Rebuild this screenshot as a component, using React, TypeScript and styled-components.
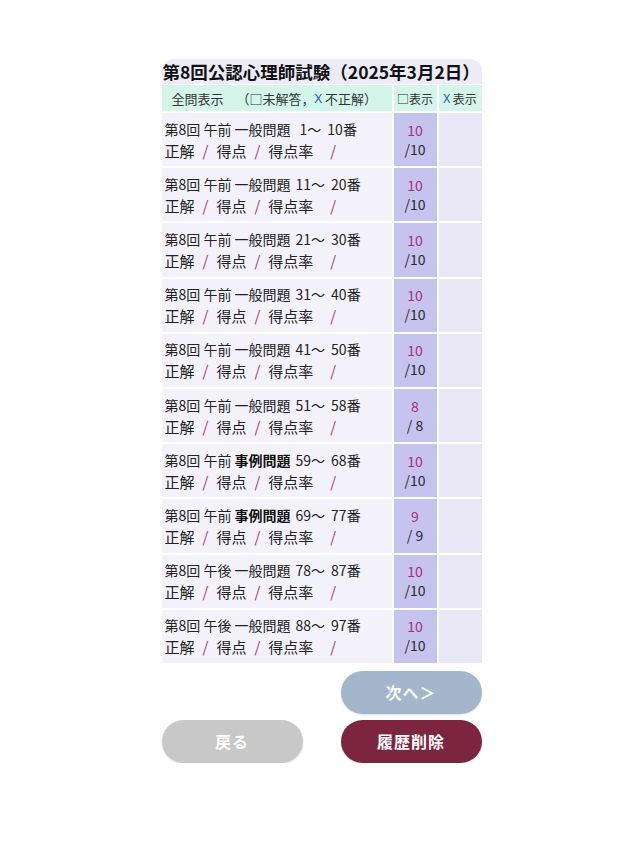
import React from "react";
import styled, { createGlobalStyle } from "styled-components";

const GlobalStyle = createGlobalStyle`
  html, body {
    margin: 0;
    padding: 0;
    background: #ffffff;
  }
  body {
    font-family: "Noto Sans CJK JP", "Noto Sans", sans-serif;
    color: #222222;
    text-spacing-trim: space-all;
  }
`;

const Page = styled.div`
  display: flex;
  justify-content: center;
  padding-top: 59px;
`;

const Column = styled.div`
  width: 320px;
  display: flex;
  flex-direction: column;
`;

const Panel = styled.section`
  background-color: #ecebf8;
  border-radius: 12px 12px 0 0;
  overflow: hidden;
`;

const Title = styled.h1`
  margin: 0;
  padding: 0 0 0 1px;
  height: 25px;
  font-size: 17.5px;
  line-height: 26px;
  font-weight: 700;
  color: #111111;
  white-space: nowrap;
`;

const Grid = styled.div`
  display: grid;
  grid-template-columns: 230px 43px 43px;
  gap: 2px;
  background-color: #ffffff;
  padding-top: 1px;
`;

const HeadCell = styled.div<{ $center?: boolean }>`
  background-color: #d4f5ea;
  height: 26px;
  display: flex;
  align-items: center;
  justify-content: ${(p) => (p.$center ? "center" : "flex-start")};
  padding-left: ${(p) => (p.$center ? "0" : "10px")};
  font-size: ${(p) => (p.$center ? "12px" : "13px")};
  color: #333333;
  white-space: pre;
`;

const Blue = styled.span`
  color: #1d5fa8;
  font-family: "Noto Sans", sans-serif;
`;

const LabelCell = styled.div`
  background-color: #f3f2fa;
  height: 53.2px;
  padding-left: 3px;
  display: flex;
  flex-direction: column;
  justify-content: center;
  color: #222222;
  white-space: nowrap;
`;

const TitleLine = styled.div`
  font-size: 14px;
  line-height: 21px;
`;

const ScoreLine = styled.div`
  font-size: 15px;
  line-height: 21px;
`;

const Strong = styled.b`
  font-weight: 700;
  color: #111111;
`;

const From = styled.span<{ $single?: boolean }>`
  margin-left: ${(p) => (p.$single ? "9px" : "5px")};
`;

const To = styled.span`
  margin-left: 6px;
`;

const Slash = styled.span<{ $wide?: boolean }>`
  color: #b0386a;
  margin: 0 8px 0 ${(p) => (p.$wide ? "17px" : "8px")};
`;

const ScoreCell = styled.div`
  background-color: #c6c4ef;
  display: flex;
  flex-direction: column;
  align-items: center;
  justify-content: center;
  font-size: 14px;
  line-height: 19px;
  color: #2a2a2a;
`;

const Correct = styled.span`
  color: #a3307a;
`;

const EmptyCell = styled.div`
  background-color: #e9e7f6;
`;

const Buttons = styled.div`
  display: grid;
  grid-template-columns: 141px 141px;
  justify-content: space-between;
  row-gap: 6px;
  margin-top: 8px;
`;

const Pill = styled.button<{ $bg: string; $col?: number }>`
  grid-column: ${(p) => p.$col ?? "auto"};
  height: 43px;
  border: none;
  border-radius: 22px;
  background-color: ${(p) => p.$bg};
  color: #ffffff;
  font-family: "Noto Sans CJK JP", sans-serif;
  font-size: 16px;
  font-weight: 700;
  letter-spacing: 1px;
  box-shadow: 0 1px 2px rgba(0, 0, 0, 0.12);
  cursor: pointer;
`;

interface Section {
  part: string;
  kind: string;
  bold?: boolean;
  from: number;
  to: number;
  total: number;
}

const sections: Section[] = [
  { part: "午前", kind: "一般問題", from: 1, to: 10, total: 10 },
  { part: "午前", kind: "一般問題", from: 11, to: 20, total: 10 },
  { part: "午前", kind: "一般問題", from: 21, to: 30, total: 10 },
  { part: "午前", kind: "一般問題", from: 31, to: 40, total: 10 },
  { part: "午前", kind: "一般問題", from: 41, to: 50, total: 10 },
  { part: "午前", kind: "一般問題", from: 51, to: 58, total: 8 },
  { part: "午前", kind: "事例問題", bold: true, from: 59, to: 68, total: 10 },
  { part: "午前", kind: "事例問題", bold: true, from: 69, to: 77, total: 9 },
  { part: "午後", kind: "一般問題", from: 78, to: 87, total: 10 },
  { part: "午後", kind: "一般問題", from: 88, to: 97, total: 10 },
];

export default function App() {
  return (
    <>
      <GlobalStyle />
      <Page>
        <Column>
          <Panel>
            <Title>第8回公認心理師試験（2025年3月2日）</Title>
            <Grid>
              <HeadCell>
                全問表示　（□未解答，<Blue>X</Blue> 不正解）
              </HeadCell>
              <HeadCell $center>□表示</HeadCell>
              <HeadCell $center>
                <Blue>X</Blue> 表示
              </HeadCell>
              {sections.map((s) => (
                <React.Fragment key={s.from}>
                  <LabelCell>
                    <TitleLine>
                      第8回 {s.part} {s.bold ? <Strong>{s.kind}</Strong> : s.kind}
                      <From $single={s.from < 10}>{s.from}</From>〜<To>{s.to}番</To>
                    </TitleLine>
                    <ScoreLine>
                      正解<Slash>/</Slash>得点<Slash>/</Slash>得点率
                      <Slash $wide>/</Slash>
                    </ScoreLine>
                  </LabelCell>
                  <ScoreCell>
                    <Correct>{s.total}</Correct>
                    <span>{s.total < 10 ? `/ ${s.total}` : `/${s.total}`}</span>
                  </ScoreCell>
                  <EmptyCell />
                </React.Fragment>
              ))}
            </Grid>
          </Panel>
          <Buttons>
            <Pill $bg="#a4b6cb" $col={2}>
              次へ＞
            </Pill>
            <Pill $bg="#c8c8c8">戻る</Pill>
            <Pill $bg="#7c2440">履歴削除</Pill>
          </Buttons>
        </Column>
      </Page>
    </>
  );
}
